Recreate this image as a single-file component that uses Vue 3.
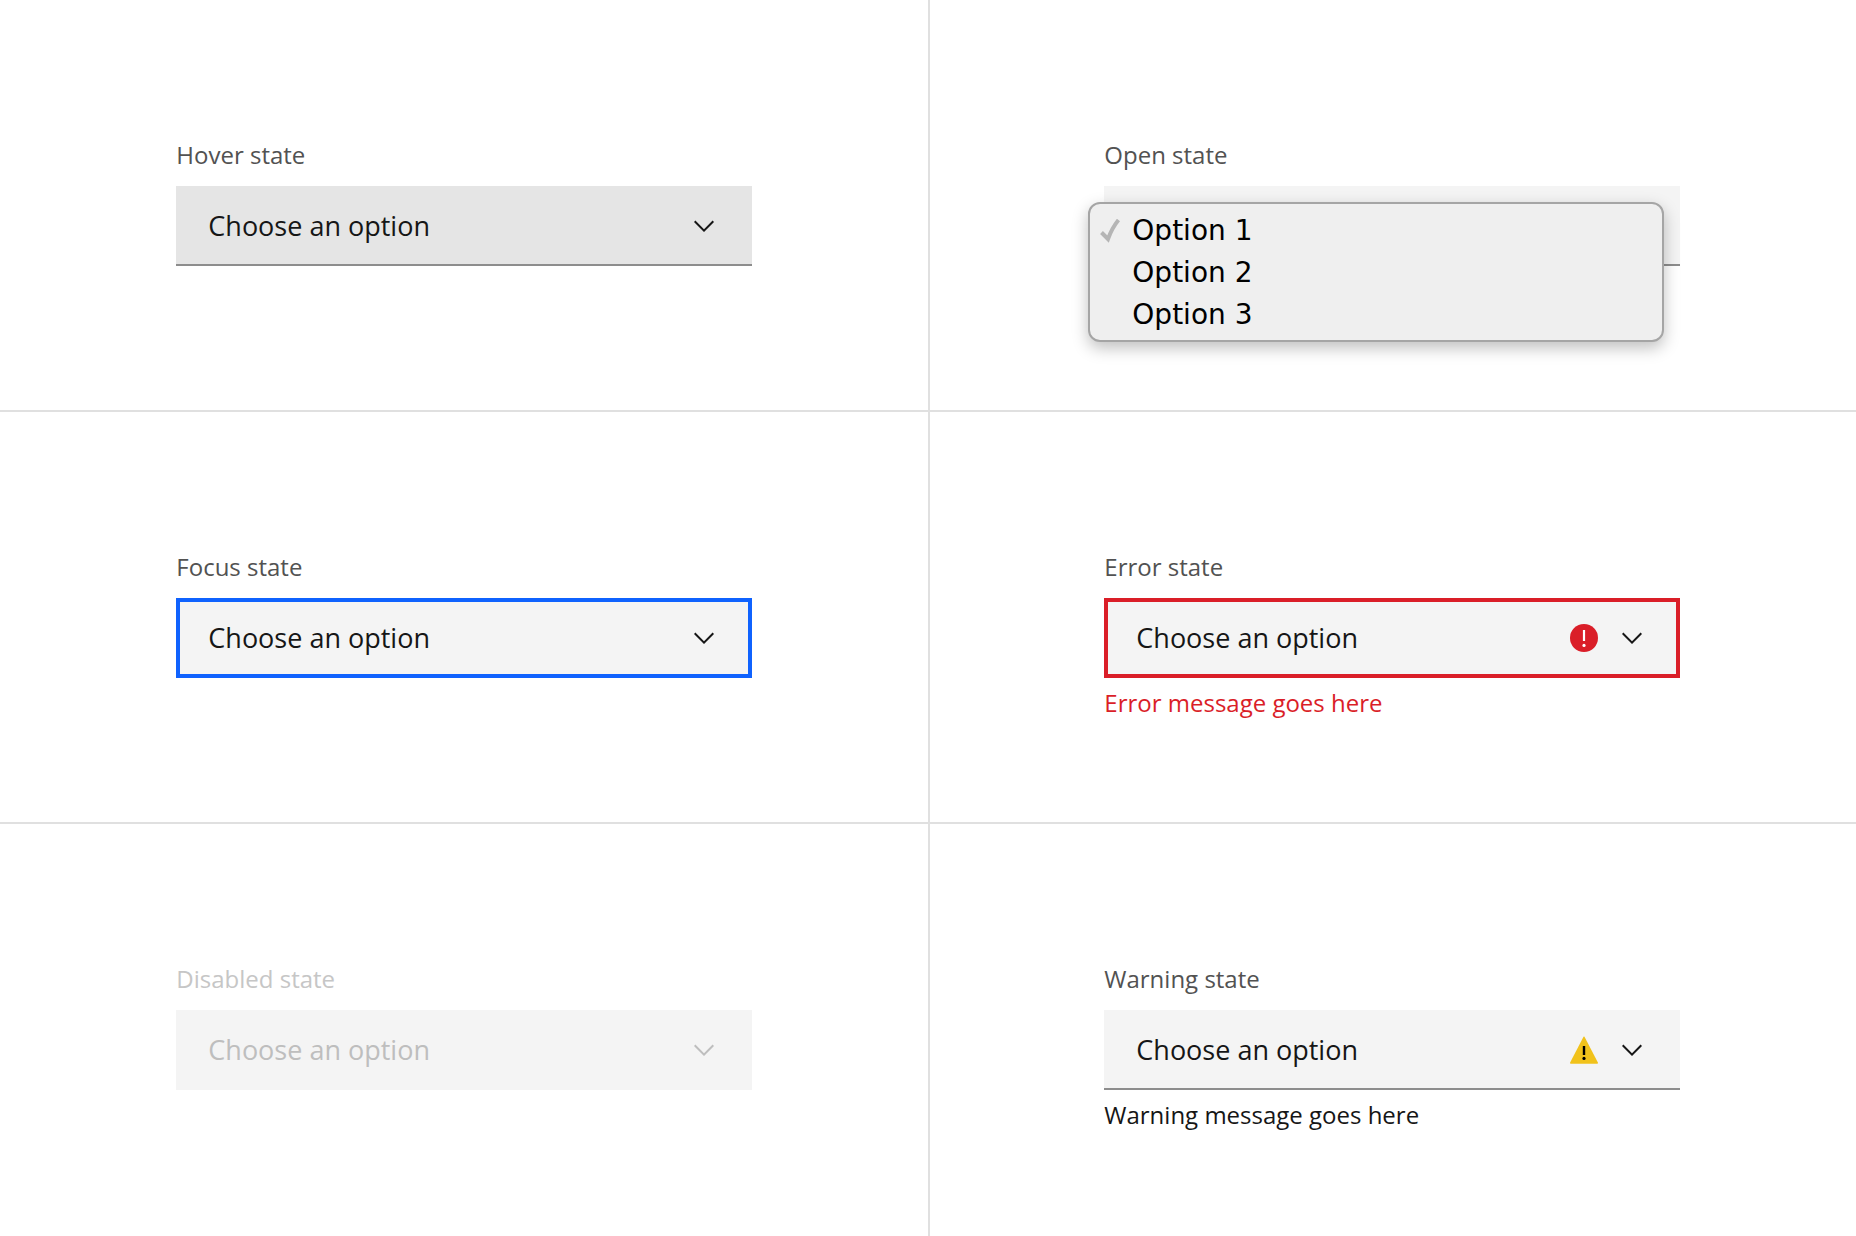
<script setup>
const choices = ['Option 1', 'Option 2', 'Option 3']

const fields = [
  { id: 'hover', label: 'Hover state' },
  { id: 'open', label: 'Open state', open: true },
  { id: 'focus', label: 'Focus state' },
  { id: 'error', label: 'Error state', message: 'Error message goes here' },
  { id: 'disabled', label: 'Disabled state' },
  { id: 'warning', label: 'Warning state', message: 'Warning message goes here' },
]
</script>

<template>
  <main class="states">
    <section v-for="field in fields" :key="field.id" class="cell" :class="field.id">
      <label class="label" :for="field.id">{{ field.label }}</label>
      <div class="control">
        <select
          :id="field.id"
          class="select"
          :disabled="field.id === 'disabled'"
          :aria-invalid="field.id === 'error'"
          :aria-describedby="field.message ? field.id + '-message' : undefined"
        >
          <option v-if="!field.open">Choose an option</option>
          <option v-for="choice in choices" :key="choice">{{ choice }}</option>
        </select>
        <div class="icons" aria-hidden="true">
          <svg v-if="field.id === 'error'" class="icon" viewBox="0 0 16 16">
            <circle cx="8" cy="8" r="7" fill="#da1e28" />
            <path d="M7.45 4h1.1v5.5h-1.1z" fill="#fff" />
            <circle cx="8" cy="11.7" r="0.8" fill="#fff" />
          </svg>
          <svg v-if="field.id === 'warning'" class="icon" viewBox="0 0 16 16">
            <path d="M7.75 1.4a.3.3 0 0 1 .5 0L15 14.4q0 .5-.4.5H1.4q-.4 0-.4-.5z" fill="#f1c21b" />
            <path d="M7.4 6h1.2v4.5H7.4z" fill="#000" />
            <circle cx="8" cy="12.2" r="0.8" fill="#000" />
          </svg>
          <svg class="icon" viewBox="0 0 16 16">
            <path d="M8 11 3 6l.7-.7L8 9.6l4.3-4.3.7.7z" fill="currentColor" />
          </svg>
        </div>
        <ul v-if="field.open" class="menu" role="listbox" :aria-label="field.label">
          <li
            v-for="(choice, index) in choices"
            :key="choice"
            class="choice"
            role="option"
            :aria-selected="index === 0"
          >
            <svg v-if="index === 0" class="check" viewBox="0 0 20 24" aria-hidden="true">
              <path d="M1.5 13.5 8 20Q12 9 18.5 1" fill="none" stroke="#b5b5b5" stroke-width="4" />
            </svg>
            <span class="choice-text">{{ choice }}</span>
          </li>
        </ul>
      </div>
      <p v-if="field.message" :id="field.id + '-message'" class="message">{{ field.message }}</p>
    </section>
  </main>
</template>

<style>
body {
  margin: 0;
  background: #fff;
}
</style>

<style scoped>
.states {
  display: grid;
  grid-template-columns: 1fr 1fr;
  grid-auto-rows: 1fr;
  min-height: 100vh;
  color: #161616;
  font-family: "Open Sans", "Noto Sans", sans-serif;
}

.cell {
  box-sizing: border-box;
  min-width: 0;
  padding: 138px 19% 72px;
  border-bottom: 2px solid #e0e0e0;
}

.cell:nth-child(even) {
  border-left: 2px solid #e0e0e0;
  padding-left: calc(19% - 2px);
}

.cell:nth-last-child(-n + 2) {
  border-bottom: 0;
}

.label {
  display: block;
  margin-bottom: 14px;
  color: #525252;
  font-size: 24px;
  line-height: 34px;
}

.control {
  position: relative;
}

.select {
  display: block;
  box-sizing: border-box;
  width: 100%;
  height: 80px;
  margin: 0;
  padding: 0 128px 0 32px;
  appearance: none;
  border: 0;
  border-bottom: 2px solid #8d8d8d;
  border-radius: 0;
  outline: 0 solid transparent;
  outline-offset: -4px;
  background: #f4f4f4;
  color: #161616;
  font: inherit;
  font-size: 27px;
}

.icons {
  position: absolute;
  top: 0;
  right: 32px;
  bottom: 0;
  display: flex;
  align-items: center;
  gap: 16px;
  pointer-events: none;
}

.icon {
  display: block;
  width: 32px;
  height: 32px;
}

.message {
  margin: 8px 0 0;
  font-size: 24px;
  line-height: 34px;
}

.hover .select {
  background: #e5e5e5;
}

.focus .select {
  border-bottom-color: transparent;
  outline: 4px solid #0f62fe;
}

.error .select {
  border-bottom-color: transparent;
  outline: 4px solid #da1e28;
}

.error .message {
  color: #da1e28;
}

.disabled .label {
  color: #c6c6c6;
}

.disabled .select,
.disabled .icons {
  color: #bebebe;
}

.disabled .select {
  border-bottom-color: transparent;
  opacity: 1;
}

.menu {
  position: absolute;
  top: 16px;
  left: -16px;
  box-sizing: border-box;
  width: 100%;
  margin: 0;
  padding: 6px 10px 4px;
  border: 2px solid #a5a5a5;
  border-radius: 12px;
  background: #efefef;
  box-shadow: 0 6px 16px rgba(0, 0, 0, 0.25);
  color: #000;
  font-family: "DejaVu Sans", sans-serif;
  font-size: 28px;
  line-height: 42px;
  list-style: none;
}

.choice {
  display: grid;
  grid-template-columns: 20px 1fr;
  align-items: center;
  column-gap: 12px;
}

.check {
  width: 20px;
  height: 24px;
}

.choice-text {
  grid-column: 2;
}
</style>
